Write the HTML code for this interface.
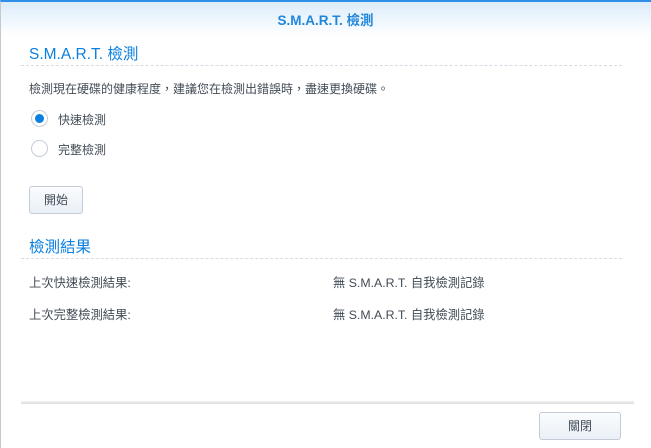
<!DOCTYPE html><html><head><meta charset="utf-8"><style>
*{margin:0;padding:0;box-sizing:border-box}
body{width:651px;height:448px;overflow:hidden;background:#fff;font-family:"Liberation Sans","Noto Sans CJK TC",sans-serif;font-size:12px;color:#414b55;position:relative}
.a{position:absolute;white-space:nowrap}
.hdr{position:absolute;left:0;top:0;width:651px;height:36px;background:linear-gradient(#dcecfa,#fff);border-top:2px solid #2f8fe6;border-left:1px solid #c8c8c8}
.h2{color:#0a7fdf;font-size:15.5px}
.dash{position:absolute;left:21px;width:601px;border-top:1px dashed #d4dde6}
.btn{position:absolute;border:1px solid #c3ccd6;border-radius:3px;background:linear-gradient(#fafcfe,#eaf0f6);text-align:center;color:#414b55}
.rad{position:absolute;width:17px;height:17px;border-radius:50%;border:1px solid #c5ced8;background:#fff}
</style></head><body>
<div style="position:absolute;left:0;top:0;width:1px;height:448px;background:#c8c8c8"></div>
<div class="hdr"></div>
<div class="a" style="left:0;width:651px;text-align:center;top:9px;font-weight:bold;color:#1f86dc;font-size:13.5px">S.M.A.R.T. 檢測</div>
<div class="a h2" style="left:29px;top:42px">S.M.A.R.T. 檢測</div>
<div class="dash" style="top:65px"></div>
<div class="a" style="left:29px;top:80px">檢測現在硬碟的健康程度，建議您在檢測出錯誤時，盡速更換硬碟。</div>
<div class="rad" style="left:31px;top:110px"><div style="position:absolute;left:3px;top:3px;width:9px;height:9px;border-radius:50%;background:#0a7fdf"></div></div>
<div class="a" style="left:58px;top:111px">快速檢測</div>
<div class="rad" style="left:31px;top:140px"></div>
<div class="a" style="left:58px;top:141px">完整檢測</div>
<div class="btn" style="left:29px;top:186px;width:54px;height:28px;line-height:26px">開始</div>
<div class="a h2" style="left:29px;top:235px">檢測結果</div>
<div class="dash" style="top:258px"></div>
<div class="a" style="left:29px;top:273px;font-size:12.3px">上次快速檢測結果:</div>
<div class="a" style="left:333px;top:273px;font-size:12.3px">無 S.M.A.R.T. 自我檢測記錄</div>
<div class="a" style="left:29px;top:305px;font-size:12.3px">上次完整檢測結果:</div>
<div class="a" style="left:333px;top:305px;font-size:12.3px">無 S.M.A.R.T. 自我檢測記錄</div>
<div style="position:absolute;left:21px;top:401px;width:613px;height:3px;background:linear-gradient(#f0f0f0,#dcdcdc)"></div>
<div class="btn" style="left:539px;top:412px;width:82px;height:28px;line-height:26px">關閉</div>
</body></html>
